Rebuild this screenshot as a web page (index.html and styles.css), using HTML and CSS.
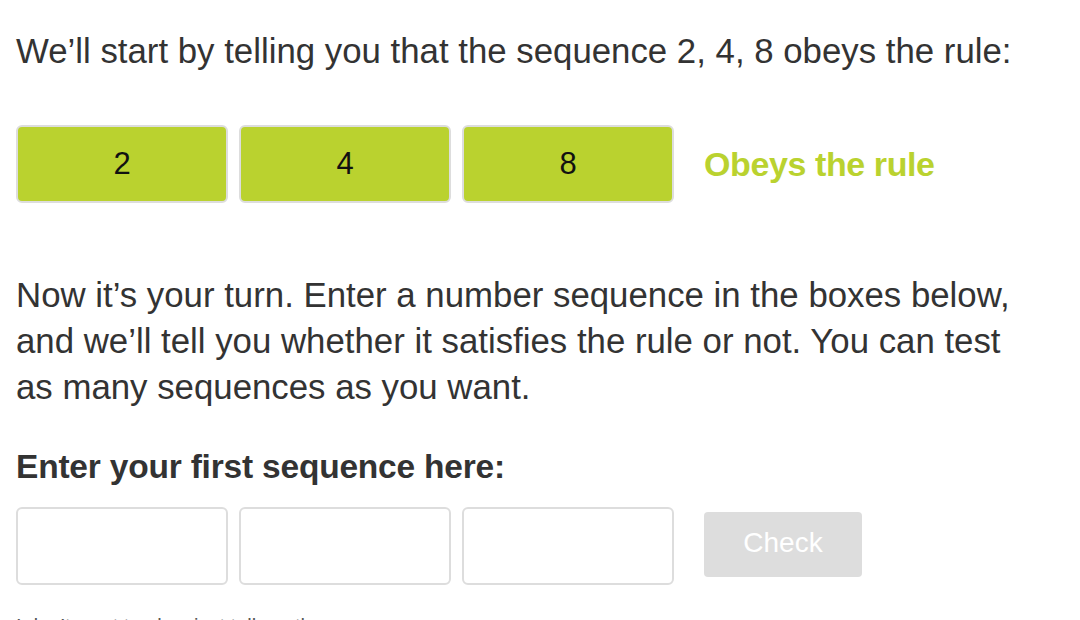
FILE: index.html
```html
<!DOCTYPE html>
<html>
<head>
<meta charset="utf-8">
<link rel="stylesheet" href="styles.css">
</head>
<body>
<div class="page">
  <p class="text intro">We’ll start by telling you that the sequence 2, 4, 8 obeys the rule:</p>
  <div class="row given">
    <div class="cell filled">2</div>
    <div class="cell filled">4</div>
    <div class="cell filled">8</div>
    <div class="verdict">Obeys the rule</div>
  </div>
  <p class="text para">Now it’s your turn. Enter a number sequence in the boxes below, and we’ll tell you whether it satisfies the rule or not. You can test as many sequences as you want.</p>
  <h2 class="heading">Enter your first sequence here:</h2>
  <div class="row entry">
    <input class="cell empty" type="text">
    <input class="cell empty" type="text">
    <input class="cell empty" type="text">
    <button class="check" type="button">Check</button>
  </div>
  <p class="giveup">I don’t want to play; just tell me the answer.</p>
</div>
</body>
</html>
```
FILE: styles.css
```css
html, body {
  margin: 0;
  padding: 0;
  background: #fff;
}
.page {
  padding: 0 16px;
  font-family: "Liberation Sans", Arial, sans-serif;
  color: #333;
}
.text {
  font-size: 34.8px;
  line-height: 46px;
  margin: 0;
}
.intro {
  padding-top: 28px;
}
.row {
  display: flex;
  align-items: center;
  gap: 11px;
}
.given {
  margin-top: 51px;
}
.cell {
  box-sizing: border-box;
  width: 212px;
  height: 78px;
  border: 2px solid #ddd;
  border-radius: 6px;
  display: flex;
  align-items: center;
  justify-content: center;
  font-family: "Liberation Sans", Arial, sans-serif;
  font-size: 31px;
  color: #111;
  margin: 0;
  padding: 0;
}
.filled {
  background: #bad22f;
}
.empty {
  background: #fff;
  outline: none;
}
.verdict {
  margin-left: 19px;
  font-size: 34px;
  font-weight: bold;
  color: #bad22f;
  letter-spacing: -0.4px;
}
.para {
  max-width: 1000px;
  margin-top: 69px;
}
.heading {
  margin: 37px 0 0;
  font-size: 33.5px;
  line-height: 40px;
  font-weight: bold;
  color: #333;
  letter-spacing: -0.2px;
}
.entry {
  margin-top: 20px;
}
.check {
  margin: 0 0 3px 19px;
  width: 158px;
  height: 65px;
  border: none;
  border-radius: 4px;
  background: #ddd;
  color: #fff;
  font-family: "Liberation Sans", Arial, sans-serif;
  font-size: 28px;
  padding: 0 0 3px;
}
.giveup {
  margin: 29px 0 0;
  font-size: 20px;
  line-height: 24px;
  color: #555;
}
```
